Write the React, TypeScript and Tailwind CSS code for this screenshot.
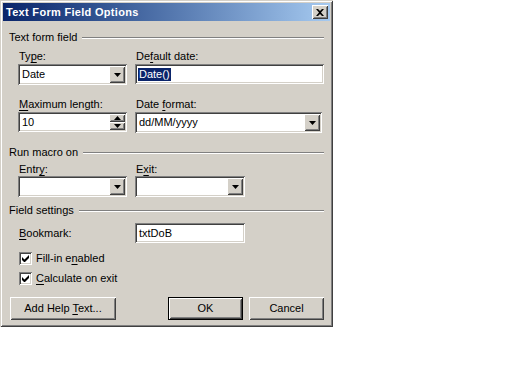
import React from "react";

const raised =
  "bg-[#d4d0c8] shadow-[inset_1px_1px_#ffffff,inset_-1px_-1px_#404040,inset_2px_2px_#d4d0c8,inset_-2px_-2px_#808080]";
const sunken =
  "bg-white shadow-[inset_1px_1px_#808080,inset_-1px_-1px_#ffffff,inset_2px_2px_#404040,inset_-2px_-2px_#d4d0c8]";

const Arrow = ({ up = false }: { up?: boolean }) => (
  <svg width="7" height="4" viewBox="0 0 7 4" className={up ? "rotate-180" : ""}>
    <path d="M0 0h7L3.5 4z" fill="#000" />
  </svg>
);

const Key = ({ children }: { children: React.ReactNode }) => <span className="underline underline-offset-[2px]">{children}</span>;

const GroupHeader = ({ title }: { title: string }) => (
  <div className="flex items-center h-[13px]">
    <span className="pr-[5px]">{title}</span>
    <div className="flex-1 border-t border-t-[#808080] border-b border-b-white" />
  </div>
);

const Select = ({ value, width }: { value: string; width: string }) => (
  <div className={`${sunken} ${width} h-[21px] flex items-center p-[2px]`}>
    <span className="flex-1 pl-[2px] truncate">{value}</span>
    <div className={`${raised} w-[16px] h-[17px] flex items-center justify-center`}>
      <Arrow />
    </div>
  </div>
);

const Check = ({ children }: { children: React.ReactNode }) => (
  <div className="flex items-center h-[13px] ml-[10px]">
    <div className={`${sunken} w-[13px] h-[13px] flex items-center justify-center`}>
      <svg width="7" height="7" viewBox="0 0 7 7">
        <path d="M0 2v3l2 2h1l4-4V0L2.5 4.5z" fill="#000" />
      </svg>
    </div>
    <span className="ml-[4px]">{children}</span>
  </div>
);

const Button = ({ children, width, primary = false }: { children: React.ReactNode; width: string; primary?: boolean }) => (
  <div className={`${width} h-[23px] ${primary ? "border border-black" : ""}`}>
    <div className={`${raised} w-full h-full flex items-center justify-center`}>
      <span>{children}</span>
    </div>
  </div>
);

export default function App() {
  return (
    <div className="min-h-screen bg-white text-[11px] leading-[13px] text-black" style={{ fontFamily: '"Liberation Sans", Arial, sans-serif' }}>
      <div className="w-[333px] h-[327px] p-[3px] bg-[#d4d0c8] shadow-[inset_1px_1px_#d4d0c8,inset_-1px_-1px_#404040,inset_2px_2px_#ffffff,inset_-2px_-2px_#808080]">
        <div className="h-[18px] flex items-center justify-between bg-gradient-to-r from-[#0a246a] to-[#a6caf0] pl-[3px] pr-[2px]">
          <span className="text-white font-bold tracking-[0.3px]">Text Form Field Options</span>
          <div className={`${raised} w-[16px] h-[14px] flex items-center justify-center`}>
            <svg width="8" height="7" viewBox="0 0 8 7">
              <path d="M0 0h2l2 2 2-2h2L5 3.5 8 7H6L4 5 2 7H0l3-3.5z" fill="#000" />
            </svg>
          </div>
        </div>

        <div className="px-[6px]">
          <div className="mt-[10px]">
            <GroupHeader title="Text form field" />
          </div>
          <div className="ml-[9px] mt-[6px] flex gap-[8px]">
            <div className="w-[109px]">
              <div className="pl-[1px]">
                Ty<Key>p</Key>e:
              </div>
              <div className="mt-[1px]">
                <Select value="Date" width="w-[109px]" />
              </div>
            </div>
            <div className="flex-1">
              <div className="pl-[1px]">
                De<Key>f</Key>ault date:
              </div>
              <div className={`${sunken} mt-[1px] h-[20px] flex items-center pl-[3px]`}>
                <span className="bg-[#0a246a] text-white px-[1px]">Date()</span>
              </div>
            </div>
          </div>

          <div className="ml-[9px] mt-[13px] flex gap-[8px]">
            <div className="w-[109px]">
              <div className="pl-[1px]">
                <Key>M</Key>aximum length:
              </div>
              <div className={`${sunken} mt-[1px] h-[20px] flex items-center p-[2px]`}>
                <span className="flex-1 pl-[2px]">10</span>
                <div className="flex flex-col w-[16px] h-[16px]">
                  <div className={`${raised} h-[8px] flex items-center justify-center`}>
                    <Arrow up />
                  </div>
                  <div className={`${raised} h-[8px] flex items-center justify-center`}>
                    <Arrow />
                  </div>
                </div>
              </div>
            </div>
            <div className="flex-1">
              <div className="pl-[1px]">
                Date <Key>f</Key>ormat:
              </div>
              <div className="mt-[1px]">
                <Select value="dd/MM/yyyy" width="w-[187px]" />
              </div>
            </div>
          </div>

          <div className="mt-[13px]">
            <GroupHeader title="Run macro on" />
          </div>
          <div className="ml-[9px] mt-[4px] flex gap-[8px]">
            <div className="w-[109px]">
              <div className="pl-[1px]">
                Entr<Key>y</Key>:
              </div>
              <Select value="" width="w-[109px]" />
            </div>
            <div>
              <div className="pl-[1px]">
                E<Key>x</Key>it:
              </div>
              <Select value="" width="w-[110px]" />
            </div>
          </div>

          <div className="mt-[7px]">
            <GroupHeader title="Field settings" />
          </div>
          <div className="ml-[9px] mt-[6px] flex items-center gap-[8px]">
            <div className="w-[109px] pl-[1px]">
              <Key>B</Key>ookmark:
            </div>
            <div className={`${sunken} w-[110px] h-[20px] flex items-center pl-[4px]`}>txtDoB</div>
          </div>

          <div className="mt-[9px]">
            <Check>
              Fill-in e<Key>n</Key>abled
            </Check>
          </div>
          <div className="mt-[7px]">
            <Check>
              <Key>C</Key>alculate on exit
            </Check>
          </div>

          <div className="mt-[12px] flex items-center">
            <div className="ml-[1px]">
              <Button width="w-[106px]">
                Add Help <Key>T</Key>ext...
              </Button>
            </div>
            <div className="flex-1" />
            <Button width="w-[75px]" primary>
              OK
            </Button>
            <div className="ml-[6px]">
              <Button width="w-[75px]">Cancel</Button>
            </div>
          </div>
        </div>
      </div>
    </div>
  );
}
